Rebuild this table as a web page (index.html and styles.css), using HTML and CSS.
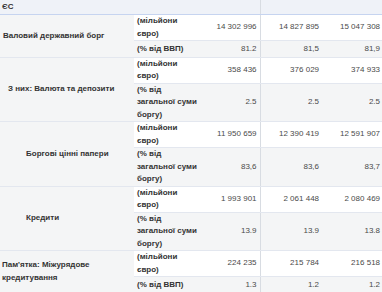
FILE: index.html
```html
<!DOCTYPE html>
<html lang="uk">
<head>
<meta charset="utf-8">
<link rel="stylesheet" href="styles.css">
</head>
<body>
<table class="t">
  <colgroup>
    <col class="c-label"><col class="c-unit"><col class="c-v1"><col class="c-v2"><col class="c-v3">
  </colgroup>
  <thead>
    <tr><th colspan="3" class="hd">ЄС</th><th colspan="2" class="hd hd2"></th></tr>
  </thead>
  <tbody>
    <tr>
      <td rowspan="2" class="lbl">Валовий державний борг</td>
      <td class="unit">(мільйони<br>євро)</td>
      <td class="v v1">14 302 996</td><td class="v">14 827 895</td><td class="v">15 047 308</td>
    </tr>
    <tr class="alt">
      <td class="unit">(% від ВВП)</td>
      <td class="v v1">81.2</td><td class="v">81,5</td><td class="v">81,9</td>
    </tr>
    <tr>
      <td rowspan="2" class="lbl ind1">З них: Валюта та депозити</td>
      <td class="unit">(мільйони<br>євро)</td>
      <td class="v v1">358 436</td><td class="v">376 029</td><td class="v">374 933</td>
    </tr>
    <tr class="alt">
      <td class="unit">(% від<br>загальної суми<br>боргу)</td>
      <td class="v v1">2.5</td><td class="v">2.5</td><td class="v">2.5</td>
    </tr>
    <tr>
      <td rowspan="2" class="lbl ind2">Боргові цінні папери</td>
      <td class="unit">(мільйони<br>євро)</td>
      <td class="v v1">11 950 659</td><td class="v">12 390 419</td><td class="v">12 591 907</td>
    </tr>
    <tr class="alt">
      <td class="unit">(% від<br>загальної суми<br>боргу)</td>
      <td class="v v1">83,6</td><td class="v">83,6</td><td class="v">83,7</td>
    </tr>
    <tr>
      <td rowspan="2" class="lbl ind2">Кредити</td>
      <td class="unit">(мільйони<br>євро)</td>
      <td class="v v1">1 993 901</td><td class="v">2 061 448</td><td class="v">2 080 469</td>
    </tr>
    <tr class="alt">
      <td class="unit">(% від<br>загальної суми<br>боргу)</td>
      <td class="v v1">13.9</td><td class="v">13.9</td><td class="v">13.8</td>
    </tr>
    <tr>
      <td rowspan="2" class="lbl ind0">Пам'ятка: Міжурядове кредитування</td>
      <td class="unit">(мільйони<br>євро)</td>
      <td class="v v1">224 235</td><td class="v">215 784</td><td class="v">216 518</td>
    </tr>
    <tr class="alt">
      <td class="unit">(% від ВВП)</td>
      <td class="v v1">1.3</td><td class="v">1.2</td><td class="v">1.2</td>
    </tr>
  </tbody>
</table>
</body>
</html>
```
FILE: styles.css
```css
html, body {
  margin: 0;
  padding: 0;
  background: #ffffff;
  overflow: hidden;
}
.t {
  border-collapse: collapse;
  table-layout: fixed;
  width: 383px;
  font-family: "Liberation Sans", Arial, sans-serif;
  font-size: 8px;
  line-height: 12.5px;
  color: #333;
}
.c-label { width: 134px; }
.c-unit { width: 61px; }
.c-v1 { width: 65px; }
.c-v2 { width: 62px; }
.c-v3 { width: 61px; }

.hd {
  height: 14px;
  padding: 0 2px;
  background: #eff2f8;
  border-bottom: 1px solid #c6d4f0;
  text-align: left;
  font-weight: bold;
  line-height: 14px;
  color: #333;
}
.hd2 { border-left: 1px solid #d8dce2; }

td {
  border-bottom: 1px solid #e3e7ef;
  vertical-align: middle;
}
.lbl {
  background: #f4f5f6;
  font-weight: bold;
  padding: 0 3px;
  text-align: left;
}
.ind0 { padding-left: 2px; }
.ind1 { padding-left: 8px; }
.ind2 { padding-left: 26px; }

.unit {
  font-weight: bold;
  padding: 0 3px;
  white-space: nowrap;
  overflow: visible;
}
.v {
  text-align: right;
  padding: 1.5px 3px;
  color: #4a4a4a;
  white-space: nowrap;
}
.v1 { border-right: 1px solid #d8dce2; }
.alt td { background: #f4f5f6; }
```
